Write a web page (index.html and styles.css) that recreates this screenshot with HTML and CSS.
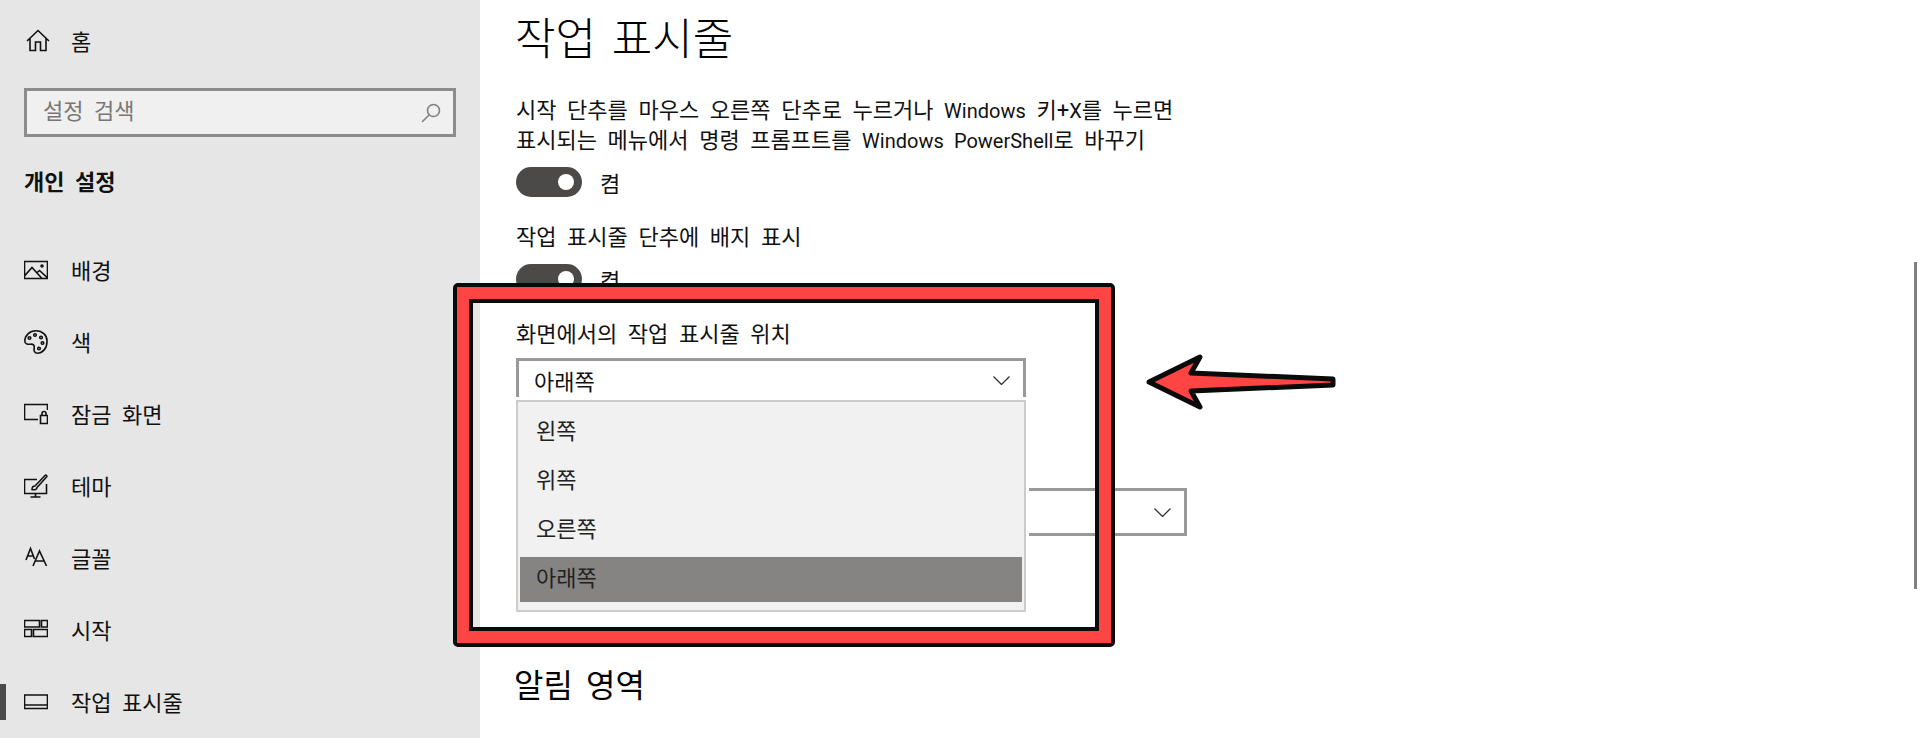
FILE: index.html
```html
<!DOCTYPE html>
<html lang="ko">
<head>
    <meta charset="UTF-8">
    <meta name="viewport" content="width=device-width, initial-scale=1.0">
    <title>작업 표시줄</title>
    <link rel="stylesheet" href="styles.css">
</head>
<body>
    <aside class="sidebar">
        <a class="nav-item home" href="#">
            <svg class="icon" width="24" height="24" viewBox="0 0 24 24"><path d="M1 12 12 1.500 23 12M4 9.500V21.500H9.500V13H14.500V21.500H20V9.500"/></svg>
            <span>홈</span>
        </a>
        <div class="search">
            <span>설정 검색</span>
            <svg class="search-icon" width="20" height="20" viewBox="0 0 20 20"><circle cx="12.500" cy="7.500" r="6"/><path d="M8.300 11.800 1 19"/></svg>
        </div>
        <h2 class="group-title">개인 설정</h2>
        <nav class="nav-list">
            <a class="nav-item" href="#">
                <svg class="icon" width="24" height="24" viewBox="0 0 24 24"><path d="M.5 3.500H23.500V20.500H.5ZM.5 18 8 9.500 18 20.500M12.500 15 15.500 12.500 23.500 20"/><circle cx="18" cy="8" r="1"/></svg>
                <span>배경</span>
            </a>
            <a class="nav-item" href="#">
                <svg class="icon" width="24" height="24" viewBox="0 0 24 24"><path d="M12 .8C5.500.8.800 5.500.800 11.200c0 3 3.500 3.200 5.700 3 2.700-.3 4 1 3.700 3.300-.3 2.500-.4 5.700 3 5.700 5.500 0 9.800-5 9.800-11.500C23.500 5.500 18.500.8 12 .8Z"/><circle cx="5.500" cy="8" r="1.300"/><circle cx="11" cy="5" r="1.300"/><circle cx="17" cy="7.500" r="1.300"/><circle cx="18.500" cy="13" r="1.300"/><circle cx="15" cy="18.500" r="1.300"/></svg>
                <span>색</span>
            </a>
            <a class="nav-item" href="#">
                <svg class="icon" width="24" height="24" viewBox="0 0 24 24"><path d="M14 17.500H.5V2.500H23.500V8M16.500 21.500V13.500H23.500V21.500ZM18 13.500V11.500A2 2 0 0 1 22 11.500V13.500"/></svg>
                <span>잠금 화면</span>
            </a>
            <a class="nav-item" href="#">
                <svg class="icon" width="24" height="24" viewBox="0 0 24 24"><path d="M13 5.500H.5V19.500H22.500V10M11.500 19.500V23M6.500 23H16.500M8 15.500C8 12 10 12 11 12L21 1.500C22 .5 23.500 2 22.500 3L13 13.500C13 15.500 10.500 16 8 15.500Z"/></svg>
                <span>테마</span>
            </a>
            <a class="nav-item" href="#">
                <svg class="icon" width="24" height="24" viewBox="0 0 24 24"><path d="M2 14 6.500 2.500 10.500 13M3.500 10H9.500M9 20 15.500 5 22.500 20M11 15H20.500"/></svg>
                <span>글꼴</span>
            </a>
            <a class="nav-item" href="#">
                <svg class="icon" width="24" height="24" viewBox="0 0 24 24"><path d="M.5 2.500H15.500V9H.5ZM17.500 2.500H23.500V9H17.500ZM.5 11.500H7.500V18.500H.5ZM9.500 11.500H23.500V18.500H9.500Z"/></svg>
                <span>시작</span>
            </a>
            <a class="nav-item active" href="#">
                <svg class="icon" width="24" height="24" viewBox="0 0 24 24"><path d="M.5 5H23.500V18.500H.5ZM.5 15H23.500"/></svg>
                <span>작업 표시줄</span>
            </a>
        </nav>
    </aside>

    <main class="content">
        <h1>작업 표시줄</h1>
        <p class="setting-label first">시작 단추를 마우스 오른쪽 단추로 누르거나 <span class="latin">Windows</span> 키+<span class="latin">X</span>를 누르면<br>표시되는 메뉴에서 명령 프롬프트를 <span class="latin">Windows PowerShell</span>로 바꾸기</p>
        <div class="toggle-row">
            <span class="toggle"></span>
            <span>켬</span>
        </div>
        <p class="setting-label">작업 표시줄 단추에 배지 표시</p>
        <div class="toggle-row">
            <span class="toggle"></span>
            <span>켬</span>
        </div>
        <p class="setting-label position">화면에서의 작업 표시줄 위치</p>
        <div class="select select-position">
            <span>아래쪽</span>
            <svg class="chevron" width="17" height="9" viewBox="0 0 17 9"><path d="M.5.5 8.500 8.500 16.500.5"/></svg>
        </div>
        <div class="select select-combine">
            <svg class="chevron" width="17" height="9" viewBox="0 0 17 9"><path d="M.5.5 8.500 8.500 16.500.5"/></svg>
        </div>
        <h3>알림 영역</h3>
    </main>

    <ul class="dropdown">
        <li>왼쪽</li>
        <li>위쪽</li>
        <li>오른쪽</li>
        <li class="selected">아래쪽</li>
    </ul>

    <div class="scrollbar"></div>

    <div class="callout"><div class="callout-red"><div class="callout-inner"></div></div></div>

    <svg class="arrow" width="196" height="58" viewBox="0 0 196 58">
        <path d="M4 29 55 4 46 20 188 26V32L46 38 55 54Z"/>
    </svg>
</body>
</html>
```

FILE: styles.css
```css
* {
    box-sizing: border-box;
    margin: 0;
    padding: 0;
}

html, body {
    height: 100%;
    overflow: hidden;
}

body {
    font-family: Roboto, "Noto Sans CJK KR", sans-serif;
    font-size: 22px;
    word-spacing: .235em;
    color: #111;
    background-color: #fff;
    display: flex;
}

a {
    color: inherit;
    text-decoration: none;
}

/* sidebar */
.sidebar {
    width: 480px;
    height: 738px;
    flex-shrink: 0;
    background-color: #e6e6e6;
}

.nav-item {
    display: flex;
    align-items: center;
    gap: 23px;
    height: 72px;
    padding-left: 24px;
}

.nav-item span {
    padding-bottom: 2px;
}

.nav-item.home {
    height: 72px;
    margin-top: 5px;
    padding-left: 26px;
    gap: 21px;
}

.nav-item.active {
    background: linear-gradient(#4c4a48, #4c4a48) no-repeat left center / 6px 36px;
}

.icon {
    flex-shrink: 0;
    fill: none;
    stroke: #111;
    stroke-width: 1.6;
}

.search {
    display: flex;
    align-items: center;
    justify-content: space-between;
    width: 432px;
    height: 49px;
    margin: 11px 0 0 24px;
    padding: 0 12px 8px 16px;
    border: 3px solid #8c8c8c;
    background-color: #f0f0f0;
    color: #777;
}

.search-icon {
    fill: none;
    stroke: #808080;
    stroke-width: 1.6;
    margin-top: 8px;
}

.group-title {
    margin: 31px 0 0 24px;
    font-size: 22px;
    line-height: 30px;
    font-weight: 700;
}

.nav-list {
    margin-top: 36px;
}

/* main column */
.content {
    flex: 1;
    padding-left: 36px;
}

h1 {
    font-size: 44px;
    line-height: 60px;
    font-weight: 300;
    color: #000;
    margin: 10px 0 0 -1px;
}

.setting-label {
    line-height: 29px;
}

.setting-label.first {
    margin: 26px 0 -1px;
}

/* Segoe-like latin runs are narrower than the hangul next to them */
.latin {
    font-size: 20px;
}

.toggle-row {
    display: flex;
    align-items: center;
    gap: 18px;
    height: 30px;
    margin: 12px 0 26px;
}

.toggle {
    position: relative;
    width: 66px;
    height: 30px;
    border-radius: 15px;
    background-color: #4c4a48;
}

.toggle::after {
    content: "";
    position: absolute;
    right: 8px;
    top: 7px;
    width: 16px;
    height: 16px;
    border-radius: 50%;
    background-color: #fff;
}

.setting-label.position {
    margin-top: 6px;
}

.select {
    display: flex;
    align-items: center;
    justify-content: space-between;
    height: 48px;
    padding: 0 13px 0 15px;
    border: 3px solid #999;
}

.select-position {
    width: 510px;
    margin-top: 9px;
    padding-bottom: 4px;
}

.select-combine {
    justify-content: flex-end;
    width: 671px;
    margin-top: 82px;
}

.chevron {
    fill: none;
    stroke: #333;
    stroke-width: 1.3;
}

h3 {
    font-size: 32px;
    line-height: 44px;
    font-weight: 400;
    color: #000;
    margin: 128px 0 0 -2px;
}

/* overlays */
.dropdown {
    position: absolute;
    left: 516px;
    top: 400px;
    width: 510px;
    height: 212px;
    display: flex;
    flex-direction: column;
    gap: 4px;
    padding: 8px 2px;
    list-style: none;
    background-color: #f1f1f1;
    border: 2px solid #ccc;
    box-shadow: 0 0 0 3px #fff;
}

.dropdown li {
    display: flex;
    align-items: center;
    height: 45px;
    padding: 0 0 7px 16px;
    color: #222;
}

.dropdown li.selected {
    background-color: #868482;
}

.scrollbar {
    position: absolute;
    left: 1914px;
    top: 262px;
    width: 3px;
    height: 327px;
    background-color: #808080;
}

.callout {
    position: absolute;
    left: 453px;
    top: 283px;
    width: 662px;
    height: 364px;
    border: 4px solid #0a0a0a;
    border-radius: 5px;
}

.callout-red {
    height: 100%;
    border: 12px solid #ff4444;
}

.callout-inner {
    height: 100%;
    border: 4px solid #0a0a0a;
}

.arrow {
    position: absolute;
    left: 1145px;
    top: 353px;
    fill: #ff4444;
    stroke: #0a0a0a;
    stroke-width: 5;
    stroke-linejoin: round;
}
```
